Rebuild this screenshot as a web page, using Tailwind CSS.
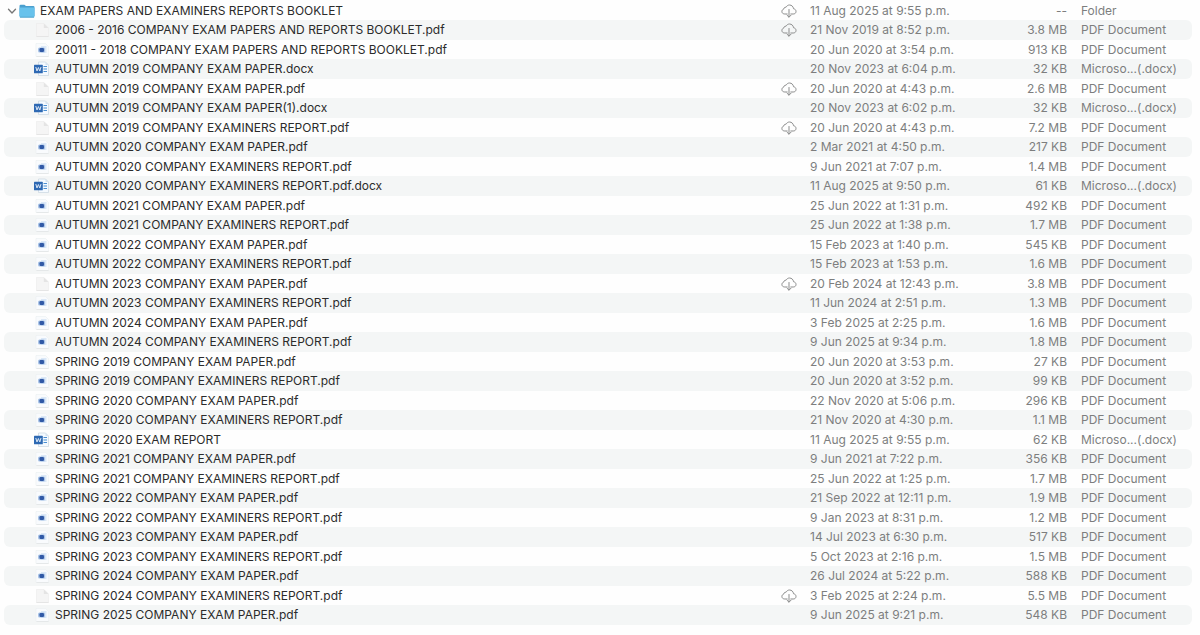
<!DOCTYPE html>
<html lang="en">
<head>
    <meta charset="UTF-8">
    <meta name="viewport" content="width=device-width, initial-scale=1.0">
    <script src="https://cdn.jsdelivr.net/npm/@tailwindcss/browser@4"></script>
    <title>Exam papers</title>
</head>
<body class="bg-[#fefefe] font-['Inter','Liberation_Sans',sans-serif] text-xs text-[#7d7e7e]">
    <main class="pt-px pl-1 pr-2">
        <table class="w-full table-fixed border-separate border-spacing-0 whitespace-nowrap" aria-label="Files">
            <colgroup>
                <col>
                <col class="w-[29px]">
                <col class="w-[177px]">
                <col class="w-20">
                <col class="w-[125px]">
            </colgroup>
            <tbody id="files"></tbody>
        </table>
    </main>
</body>
<script>
    const icons = {
        folder: `<svg class="w-4 h-4 shrink-0" viewBox="0 0 16 16">
            <path d="M0.500 3Q0.500 1.800 1.700 1.800H5.400L7 3H14.300Q15.500 3 15.500 4.200V13H0.500Z" fill="#4a9fce"/>
            <rect x="0.500" y="4.600" width="15" height="9.900" rx="1" fill="#68c2ec"/>
            <path d="M1 14.200H15" stroke="#4f9fc8" stroke-width="0.800"/>
        </svg>`,
        blank: `<svg class="w-4 h-4 shrink-0" viewBox="0 0 16 16">
            <path d="M2.500 1.500H10L14.500 6V14.500H2.500Z" fill="#f5f5f5" stroke="#ececec" stroke-width="0.700"/>
            <path d="M9.800 1.500V6H14.500Z" fill="#e4e4e4"/>
            <path d="M2.500 14.500H14.500" stroke="#e2e2e2" stroke-width="0.800"/>
        </svg>`,
        pdf: `<svg class="w-4 h-4 shrink-0" viewBox="0 0 16 16">
            <path d="M2 1.500H11.500L14.500 4.500V14.500H2Z" fill="#f9fbfd" stroke="#edf0f2" stroke-width="0.700"/>
            <path d="M7 4H12.500V11H7Z" fill="#dbe8f7"/>
            <path d="M2.500 14.500H14.500" stroke="#e2e4e6" stroke-width="0.800"/>
            <rect x="4" y="5.500" width="7" height="5" rx="1.500" fill="#a9c3e6"/>
            <rect x="5.500" y="6" width="4.500" height="4" rx="1.200" fill="#3059a6"/>
        </svg>`,
        word: `<svg class="w-4 h-4 shrink-0" viewBox="0 0 16 16">
            <path d="M4.500 1H11.500L14.500 4V14.500H4.500Z" fill="#f5faff" stroke="#c8d5e0" stroke-width="0.700"/>
            <path d="M11.500 1V4H14.500Z" fill="#d6e2ee"/>
            <path d="M9.500 5.500H13M9.500 8H13M9.500 10.500H13" stroke="#4b8fd2" stroke-width="1.200"/>
            <rect x="0" y="3.700" width="8.800" height="8.600" rx="0.600" fill="#2e69b3"/>
            <path d="M1.800 6L3 10L4.400 6.500L5.800 10L7 6" fill="none" stroke="#d8e5f5" stroke-width="1"/>
        </svg>`,
        cloud: `<svg class="w-4 h-4" viewBox="0 0 16 16" fill="none" stroke="#8b8c8c" stroke-width="1" stroke-linecap="round" stroke-linejoin="round">
            <path d="M6.200 11H3.800C2.100 11 0.900 10 0.900 8.500C0.900 7.200 1.700 6.300 2.900 6C2.800 4.800 3.900 3.900 5 4.300C5.800 2.800 7 2 8.500 2C10.700 2 12.300 3.600 12.500 5.700C14 6 15 7 15 8.400C15 10 13.900 11 12.200 11H9.800"/>
            <path d="M8 6.500V14M6 12.200L8 14.200L10 12.200"/>
        </svg>`,
        none: ''
    };

    const kinds = { pdf: 'PDF Document', blank: 'PDF Document', word: 'Microso...(.docx)' };

    // icon, name, date, size ("blank" files are still in the cloud)
    const files = [
        ['blank', '2006 - 2016 COMPANY EXAM PAPERS AND REPORTS BOOKLET.pdf', '21 Nov 2019 at 8:52 p.m.', '3.8 MB'],
        ['pdf', '20011 - 2018 COMPANY EXAM PAPERS AND REPORTS BOOKLET.pdf', '20 Jun 2020 at 3:54 p.m.', '913 KB'],
        ['word', 'AUTUMN 2019 COMPANY EXAM PAPER.docx', '20 Nov 2023 at 6:04 p.m.', '32 KB'],
        ['blank', 'AUTUMN 2019 COMPANY EXAM PAPER.pdf', '20 Jun 2020 at 4:43 p.m.', '2.6 MB'],
        ['word', 'AUTUMN 2019 COMPANY EXAM PAPER(1).docx', '20 Nov 2023 at 6:02 p.m.', '32 KB'],
        ['blank', 'AUTUMN 2019 COMPANY EXAMINERS REPORT.pdf', '20 Jun 2020 at 4:43 p.m.', '7.2 MB'],
        ['pdf', 'AUTUMN 2020 COMPANY EXAM PAPER.pdf', '2 Mar 2021 at 4:50 p.m.', '217 KB'],
        ['pdf', 'AUTUMN 2020 COMPANY EXAMINERS REPORT.pdf', '9 Jun 2021 at 7:07 p.m.', '1.4 MB'],
        ['word', 'AUTUMN 2020 COMPANY EXAMINERS REPORT.pdf.docx', '11 Aug 2025 at 9:50 p.m.', '61 KB'],
        ['pdf', 'AUTUMN 2021 COMPANY EXAM PAPER.pdf', '25 Jun 2022 at 1:31 p.m.', '492 KB'],
        ['pdf', 'AUTUMN 2021 COMPANY EXAMINERS REPORT.pdf', '25 Jun 2022 at 1:38 p.m.', '1.7 MB'],
        ['pdf', 'AUTUMN 2022 COMPANY EXAM PAPER.pdf', '15 Feb 2023 at 1:40 p.m.', '545 KB'],
        ['pdf', 'AUTUMN 2022 COMPANY EXAMINERS REPORT.pdf', '15 Feb 2023 at 1:53 p.m.', '1.6 MB'],
        ['blank', 'AUTUMN 2023 COMPANY EXAM PAPER.pdf', '20 Feb 2024 at 12:43 p.m.', '3.8 MB'],
        ['pdf', 'AUTUMN 2023 COMPANY EXAMINERS REPORT.pdf', '11 Jun 2024 at 2:51 p.m.', '1.3 MB'],
        ['pdf', 'AUTUMN 2024 COMPANY EXAM PAPER.pdf', '3 Feb 2025 at 2:25 p.m.', '1.6 MB'],
        ['pdf', 'AUTUMN 2024 COMPANY EXAMINERS REPORT.pdf', '9 Jun 2025 at 9:34 p.m.', '1.8 MB'],
        ['pdf', 'SPRING 2019 COMPANY EXAM PAPER.pdf', '20 Jun 2020 at 3:53 p.m.', '27 KB'],
        ['pdf', 'SPRING 2019 COMPANY EXAMINERS REPORT.pdf', '20 Jun 2020 at 3:52 p.m.', '99 KB'],
        ['pdf', 'SPRING 2020 COMPANY EXAM PAPER.pdf', '22 Nov 2020 at 5:06 p.m.', '296 KB'],
        ['pdf', 'SPRING 2020 COMPANY EXAMINERS REPORT.pdf', '21 Nov 2020 at 4:30 p.m.', '1.1 MB'],
        ['word', 'SPRING 2020 EXAM REPORT', '11 Aug 2025 at 9:55 p.m.', '62 KB'],
        ['pdf', 'SPRING 2021 COMPANY EXAM PAPER.pdf', '9 Jun 2021 at 7:22 p.m.', '356 KB'],
        ['pdf', 'SPRING 2021 COMPANY EXAMINERS REPORT.pdf', '25 Jun 2022 at 1:25 p.m.', '1.7 MB'],
        ['pdf', 'SPRING 2022 COMPANY EXAM PAPER.pdf', '21 Sep 2022 at 12:11 p.m.', '1.9 MB'],
        ['pdf', 'SPRING 2022 COMPANY EXAMINERS REPORT.pdf', '9 Jan 2023 at 8:31 p.m.', '1.2 MB'],
        ['pdf', 'SPRING 2023 COMPANY EXAM PAPER.pdf', '14 Jul 2023 at 6:30 p.m.', '517 KB'],
        ['pdf', 'SPRING 2023 COMPANY EXAMINERS REPORT.pdf', '5 Oct 2023 at 2:16 p.m.', '1.5 MB'],
        ['pdf', 'SPRING 2024 COMPANY EXAM PAPER.pdf', '26 Jul 2024 at 5:22 p.m.', '588 KB'],
        ['blank', 'SPRING 2024 COMPANY EXAMINERS REPORT.pdf', '3 Feb 2025 at 2:24 p.m.', '5.5 MB'],
        ['pdf', 'SPRING 2025 COMPANY EXAM PAPER.pdf', '9 Jun 2025 at 9:21 p.m.', '548 KB']
    ];

    function row(nameCell, cloud, date, size, kind) {
        return `
        <tr class="h-[19px] leading-[19px] even:h-5 even:leading-5 even:bg-[#f4f6f6]">
            <td class="p-0 rounded-l-md">${nameCell}</td>
            <td class="p-0"><div class="flex items-center h-[19px]">${cloud}</div></td>
            <td class="p-0">${date}</td>
            <td class="p-0 text-right">${size}</td>
            <td class="p-0 pl-3.5 rounded-r-md">${kind}</td>
        </tr>`;
    }

    const folderCell = `
        <div class="flex items-center h-[19px] pl-0.5 text-[#2b2b2b]">
            <button class="flex justify-center items-center w-3 h-4 mr-px" aria-label="Collapse folder" onclick="toggleFolder()">
                <svg class="w-2.5 h-2.5" viewBox="0 0 10 10" fill="none" stroke="#777" stroke-width="1.300" stroke-linecap="round" stroke-linejoin="round"><path d="M1.500 3.200L5 7L8.500 3.200"/></svg>
            </button>
            ${icons.folder}
            <span class="ml-[5px]">EXAM PAPERS AND EXAMINERS REPORTS BOOKLET</span>
        </div>`;

    let open = true;

    function render() {
        let html = row(folderCell, icons.cloud, '11 Aug 2025 at 9:55 p.m.', '--', 'Folder');
        if (open) {
            files.forEach(([icon, name, date, size]) => {
                const nameCell = `<div class="flex items-center h-[19px] gap-[5px] pl-[30px] text-[#2b2b2b]">${icons[icon]}<span>${name}</span></div>`;
                html += row(nameCell, icon === 'blank' ? icons.cloud : icons.none, date, size, kinds[icon]);
            });
        }
        document.getElementById('files').innerHTML = html;
    }

    function toggleFolder() {
        open = !open;
        render();
    }

    render();
</script>
</html>
